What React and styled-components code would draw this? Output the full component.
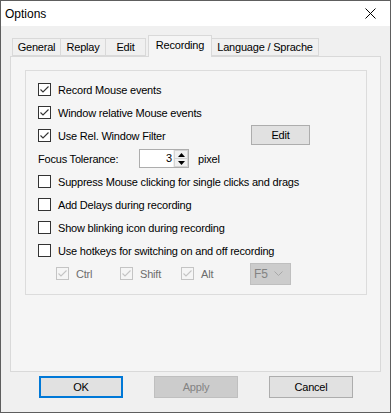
import React from "react";
import styled, { createGlobalStyle } from "styled-components";

const Global = createGlobalStyle`
  html, body { margin: 0; padding: 0; background: #f0f0f0; }
  * { box-sizing: border-box; }
  body { font-family: "Liberation Sans", Arial, sans-serif; font-size: 11px; letter-spacing: -0.2px; color: #000; }
`;

const Window = styled.div`
  width: 391px;
  height: 413px;
  border: 1px solid #5e5e5e;
  display: flex;
  flex-direction: column;
  background: #f0f0f0;
`;

const TitleBar = styled.div`
  height: 25px;
  background: #fff;
  display: flex;
  align-items: center;
  justify-content: space-between;
  padding: 0 0 0 4px;
  font-size: 12px;
  letter-spacing: 0;
`;

const CloseBtn = styled.div`
  width: 46px;
  height: 25px;
  display: flex;
  align-items: center;
  justify-content: center;
  padding-left: 6px;
`;

const Body = styled.div`
  flex: 1;
  padding: 9px 9px 0 9px;
  display: flex;
  flex-direction: column;
`;

const TabStrip = styled.div`
  display: flex;
  align-items: flex-end;
  height: 21px;
  padding-left: 2px;
  position: relative;
  z-index: 1;
`;

const Tab = styled.div`
  width: ${(p) => p.$w}px;
  height: ${(p) => (p.$active ? "22px" : "18px")};
  margin: ${(p) => (p.$active ? "0 0 -1px 2px" : "0")};
  border: 1px solid #d9d9d9;
  border-bottom: ${(p) => (p.$active ? "none" : "1px solid #d9d9d9")};
  border-left: ${(p) => (p.$first || p.$active ? "1px solid #d9d9d9" : "none")};
  background: ${(p) => (p.$active ? "#f5f5f5" : "#f0f0f0")};
  display: flex;
  justify-content: center;
  align-items: ${(p) => (p.$active ? "flex-start" : "center")};
  padding-top: ${(p) => (p.$active ? "3px" : "0")};
  white-space: nowrap;
`;

const Panel = styled.div`
  width: 371px;
  height: 316px;
  border: 1px solid #d9d9d9;
  background: #f5f5f5;
  padding: 13px 0 0 14px;
`;

const Group = styled.div`
  width: 342px;
  height: 225px;
  border: 1px solid #dcdcdc;
  padding: 7px 0 0 12px;
  display: flex;
  flex-direction: column;
`;

const Row = styled.div`
  height: 23px;
  display: flex;
  align-items: center;
  padding-right: ${(p) => p.$padRight || 0}px;
  white-space: nowrap;
`;

const Box = styled.span`
  width: 13px;
  height: 13px;
  flex: 0 0 13px;
  border: 1px solid ${(p) => (p.$disabled ? "#c4c4c4" : "#333")};
  background: ${(p) => (p.$disabled ? "#f5f5f5" : "#fff")};
  display: inline-flex;
  align-items: center;
  justify-content: center;
  margin-right: 7px;
`;

const Label = styled.span`
  color: ${(p) => (p.$disabled ? "#6d6d6d" : "#000")};
`;

const Check = ({ checked, disabled, label }) => (
  <>
    <Box $disabled={disabled}>
      {checked && (
        <svg width="11" height="11" viewBox="0 0 11 11">
          <polyline
            points="1.5,5.5 4,8 9.5,2.5"
            fill="none"
            stroke={disabled ? "#c4c4c4" : "#333"}
            strokeWidth="1.1"
          />
        </svg>
      )}
    </Box>
    <Label $disabled={disabled}>{label}</Label>
  </>
);

const SmallButton = styled.button`
  margin-left: auto;
  width: 59px;
  height: 20px;
  border: 1px solid #adadad;
  background: #e1e1e1;
  font: inherit;
  letter-spacing: inherit;
  color: #000;
  padding: 0;
  margin-top: -2px;
`;

const FieldLabel = styled.span`
  width: 101px;
`;

const Spin = styled.div`
  width: 50px;
  height: 19px;
  border: 1px solid #adadad;
  background: #fff;
  display: flex;
`;

const SpinValue = styled.span`
  flex: 1;
  text-align: right;
  padding-right: 1px;
  line-height: 17px;
`;

const SpinButtons = styled.div`
  width: 15px;
  display: flex;
  flex-direction: column;
  border-left: 1px solid #f0f0f0;
`;

const SpinHalf = styled.div`
  flex: 1;
  background: #f0f0f0;
  border: 1px solid #d4d4d4;
  margin: ${(p) => (p.$top ? "0 0 0 0" : "-1px 0 0 0")};
  display: flex;
  align-items: center;
  justify-content: center;
`;

const Unit = styled.span`
  margin-left: 9px;
`;

const HotkeyGrid = styled.div`
  display: grid;
  grid-template-columns: 64px 61px 69px 41px;
  align-items: center;
  margin-left: 18px;
  height: 23px;
`;

const Opt = styled.div`
  display: flex;
  align-items: center;
`;

const Dropdown = styled.div`
  width: 41px;
  height: 22px;
  border: 1px solid #bfbfbf;
  background: #cccccc;
  color: #838383;
  display: flex;
  align-items: center;
  justify-content: space-between;
  padding: 0 7px 0 3px;
  font-size: 12px;
`;

const ButtonBar = styled.div`
  display: flex;
  margin-top: 4px;
  padding-left: 29px;
  gap: 31px;
`;

const DlgButton = styled.button`
  width: ${(p) => p.$w || 84}px;
  height: 22px;
  font: inherit;
  letter-spacing: inherit;
  padding: 0;
  border: ${(p) => (p.$default ? "2px solid #0078d7" : "1px solid " + (p.disabled ? "#bfbfbf" : "#adadad"))};
  background: ${(p) => (p.disabled ? "#cccccc" : "#e1e1e1")};
  color: ${(p) => (p.disabled ? "#838383" : "#000")};
`;

export default function App() {
  return (
    <>
      <Global />
      <Window>
        <TitleBar>
          <span>Options</span>
          <CloseBtn>
            <svg width="11" height="11" viewBox="0 0 11 11">
              <path d="M0.5 0.5 L10.5 10.5 M10.5 0.5 L0.5 10.5" stroke="#000" strokeWidth="1" />
            </svg>
          </CloseBtn>
        </TitleBar>
        <Body>
          <TabStrip>
            <Tab $first $w={49}>General</Tab>
            <Tab $w={45}>Replay</Tab>
            <Tab $w={40}>Edit</Tab>
            <Tab $active $w={64}>Recording</Tab>
            <Tab $w={107}>Language / Sprache</Tab>
          </TabStrip>
          <Panel>
            <Group>
              <Row><Check checked label="Record Mouse events" /></Row>
              <Row><Check checked label="Window relative Mouse events" /></Row>
              <Row $padRight={56}>
                <Check checked label="Use Rel. Window Filter" />
                <SmallButton>Edit</SmallButton>
              </Row>
              <Row>
                <FieldLabel>Focus Tolerance:</FieldLabel>
                <Spin>
                  <SpinValue>3</SpinValue>
                  <SpinButtons>
                    <SpinHalf $top>
                      <svg width="7" height="4" viewBox="0 0 7 4"><polygon points="3.5,0 7,4 0,4" fill="#000" /></svg>
                    </SpinHalf>
                    <SpinHalf>
                      <svg width="7" height="4" viewBox="0 0 7 4"><polygon points="0,0 7,0 3.5,4" fill="#000" /></svg>
                    </SpinHalf>
                  </SpinButtons>
                </Spin>
                <Unit>pixel</Unit>
              </Row>
              <Row><Check label="Suppress Mouse clicking for single clicks and drags" /></Row>
              <Row><Check label="Add Delays during recording" /></Row>
              <Row><Check label="Show blinking icon during recording" /></Row>
              <Row><Check label="Use hotkeys for switching on and off recording" /></Row>
              <HotkeyGrid>
                <Opt><Check checked disabled label="Ctrl" /></Opt>
                <Opt><Check checked disabled label="Shift" /></Opt>
                <Opt><Check checked disabled label="Alt" /></Opt>
                <Dropdown>
                  <span>F5</span>
                  <svg width="9" height="5" viewBox="0 0 9 5">
                    <polyline points="0.5,0.5 4.5,4.5 8.5,0.5" fill="none" stroke="#a8a8a8" strokeWidth="1" />
                  </svg>
                </Dropdown>
              </HotkeyGrid>
            </Group>
          </Panel>
          <ButtonBar>
            <DlgButton $default>OK</DlgButton>
            <DlgButton disabled>Apply</DlgButton>
            <DlgButton>Cancel</DlgButton>
          </ButtonBar>
        </Body>
      </Window>
    </>
  );
}
